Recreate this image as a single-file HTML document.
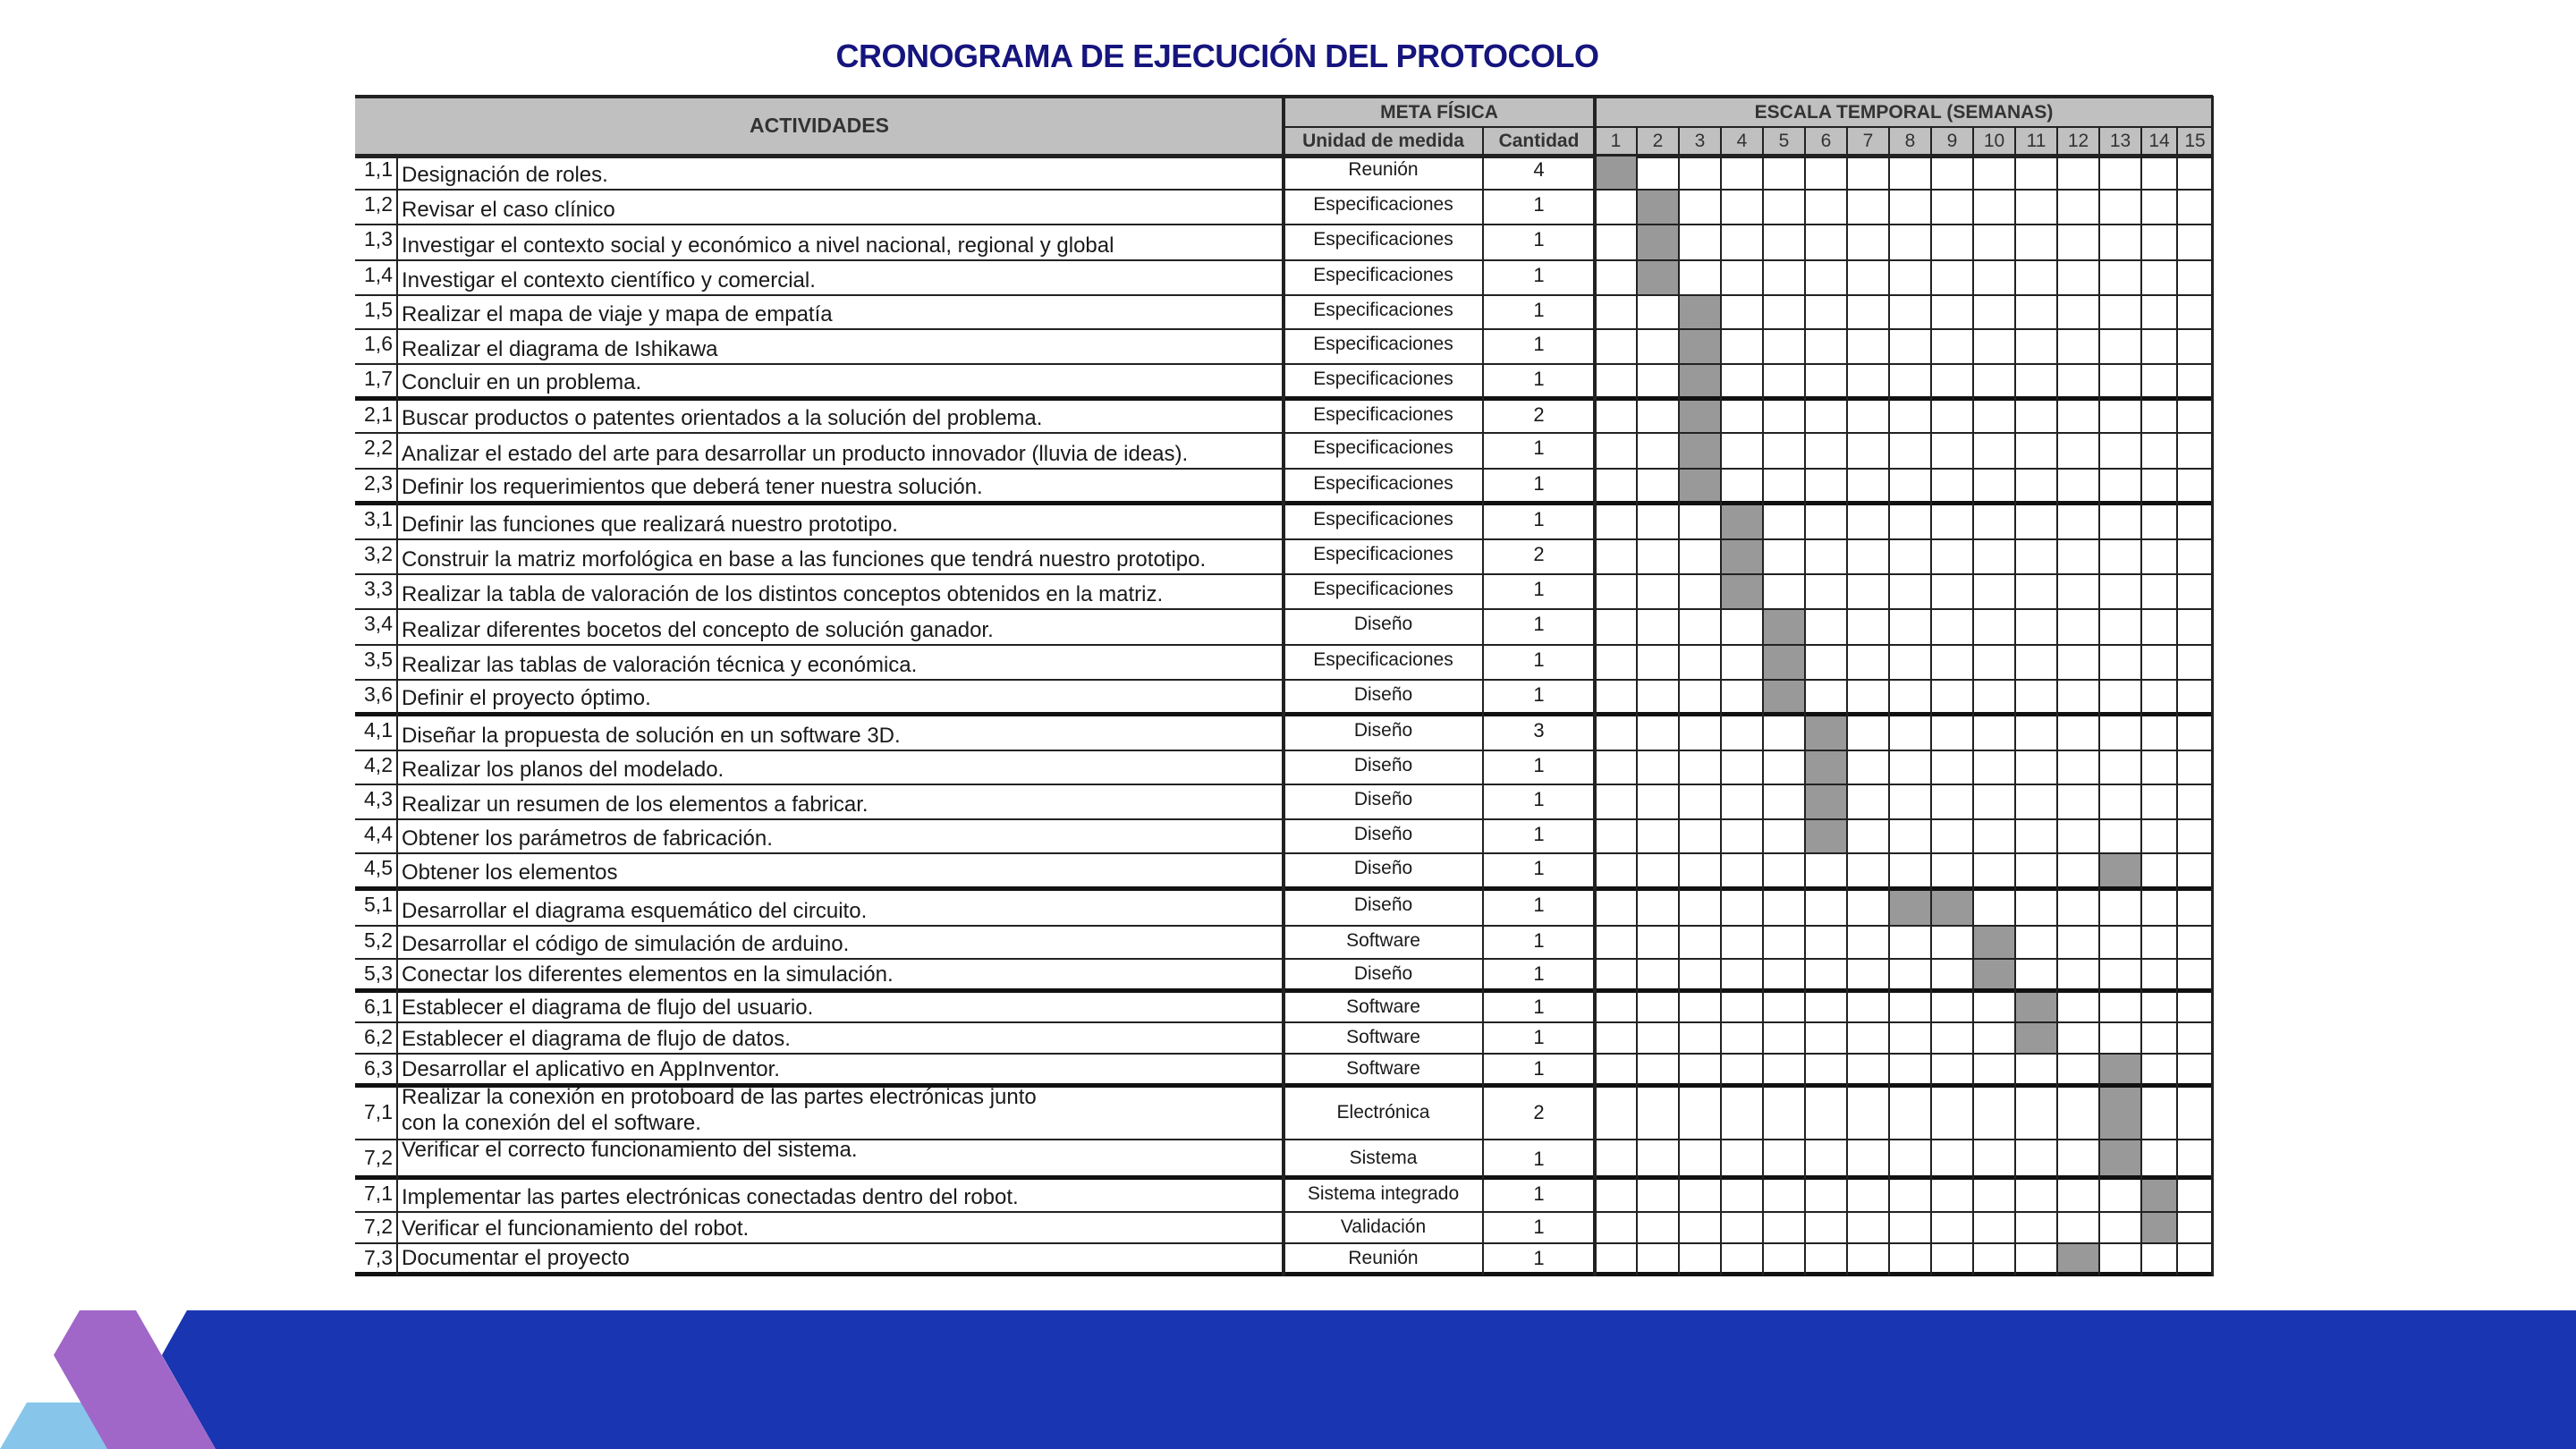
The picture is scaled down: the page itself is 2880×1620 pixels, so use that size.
<!DOCTYPE html>
<html><head><meta charset="utf-8"><style>
*{margin:0;padding:0;box-sizing:border-box}
body{width:2880px;height:1620px;background:#fff;position:relative;overflow:hidden;font-family:"Liberation Sans",Arial,sans-serif;color:#1a1a1a}
.title{position:absolute;left:0;width:2722px;top:42px;text-align:center;font-weight:bold;font-size:36px;color:#16157e;letter-spacing:-0.5px}
.hd{position:absolute;background:#c0c0c0}
.r{position:absolute;left:397px;width:2077px;border-bottom:2px solid #222}
.r.t{border-bottom:5px solid #111}
.n{position:absolute;left:0;width:45px;top:2px;text-align:right;font-size:23px;padding-right:3px}
.a{position:absolute;left:52px;bottom:1px;font-size:24px;white-space:nowrap;line-height:28px}
.u{position:absolute;left:1038px;width:223px;top:4px;text-align:center;font-size:21px;white-space:nowrap}
.q{position:absolute;left:1261px;width:125px;top:3px;text-align:center;font-size:22px}
.v{position:absolute;background:#222}
.s{position:absolute;background:#999}
.wk{position:absolute;top:142px;height:32px;font-size:21px;text-align:center;line-height:32px;color:#333}
</style></head><body>
<div class="title">CRONOGRAMA DE EJECUCIÓN DEL PROTOCOLO</div>

<div class="hd" style="left:397px;top:107px;width:2077px;height:67px"></div>
<div class="v" style="left:397px;top:106px;width:2077px;height:4px"></div>
<div style="position:absolute;left:397px;width:1038px;top:107px;height:67px;line-height:67px;text-align:center;font-weight:bold;font-size:23px;color:#333">ACTIVIDADES</div>
<div style="position:absolute;left:1435px;width:348px;top:110px;height:32px;line-height:32px;text-align:center;font-weight:bold;font-size:21px;color:#333">META FÍSICA</div>
<div style="position:absolute;left:1783px;width:691px;top:110px;height:32px;line-height:32px;text-align:center;font-weight:bold;font-size:21px;color:#333">ESCALA TEMPORAL (SEMANAS)</div>
<div style="position:absolute;left:1435px;width:223px;top:142px;height:32px;line-height:32px;text-align:center;font-weight:bold;font-size:21px;color:#333">Unidad de medida</div>
<div style="position:absolute;left:1658px;width:125px;top:142px;height:32px;line-height:32px;text-align:center;font-weight:bold;font-size:21px;color:#333">Cantidad</div>
<div class="v" style="left:1435px;top:141px;width:1039px;height:2px"></div>
<div class="wk" style="left:1783px;width:47px">1</div><div class="wk" style="left:1830px;width:47px">2</div><div class="wk" style="left:1877px;width:47px">3</div><div class="wk" style="left:1924px;width:47px">4</div><div class="wk" style="left:1971px;width:47px">5</div><div class="wk" style="left:2018px;width:47px">6</div><div class="wk" style="left:2065px;width:47px">7</div><div class="wk" style="left:2112px;width:47px">8</div><div class="wk" style="left:2159px;width:47px">9</div><div class="wk" style="left:2206px;width:47px">10</div><div class="wk" style="left:2253px;width:47px">11</div><div class="wk" style="left:2300px;width:47px">12</div><div class="wk" style="left:2347px;width:47px">13</div><div class="wk" style="left:2394px;width:40px">14</div><div class="wk" style="left:2434px;width:40px">15</div>
<div class="v" style="left:397px;top:172px;width:2077px;height:5px"></div>

<div class="s" style="left:1783px;top:175px;width:47px;height:38px"></div>
<div class="s" style="left:1830px;top:213px;width:47px;height:118px"></div>
<div class="s" style="left:1877px;top:331px;width:47px;height:233px"></div>
<div class="s" style="left:1924px;top:564px;width:47px;height:118px"></div>
<div class="s" style="left:1971px;top:682px;width:47px;height:117px"></div>
<div class="s" style="left:2018px;top:799px;width:47px;height:156px"></div>
<div class="s" style="left:2347px;top:955px;width:47px;height:39px"></div>
<div class="s" style="left:2112px;top:994px;width:94px;height:42px"></div>
<div class="s" style="left:2206px;top:1036px;width:47px;height:72px"></div>
<div class="s" style="left:2253px;top:1108px;width:47px;height:71px"></div>
<div class="s" style="left:2347px;top:1179px;width:47px;height:138px"></div>
<div class="s" style="left:2394px;top:1317px;width:40px;height:74px"></div>
<div class="s" style="left:2300px;top:1391px;width:47px;height:34px"></div>

<div class="r" style="top:174px;height:39px"><span class="n">1,1</span><span class="a">Designación de roles.</span><span class="u">Reunión</span><span class="q">4</span></div>
<div class="r" style="top:213px;height:39px"><span class="n">1,2</span><span class="a">Revisar el caso clínico</span><span class="u">Especificaciones</span><span class="q">1</span></div>
<div class="r" style="top:252px;height:40px"><span class="n">1,3</span><span class="a">Investigar el contexto social y económico a nivel nacional, regional y global</span><span class="u">Especificaciones</span><span class="q">1</span></div>
<div class="r" style="top:292px;height:39px"><span class="n">1,4</span><span class="a">Investigar el contexto científico y comercial.</span><span class="u">Especificaciones</span><span class="q">1</span></div>
<div class="r" style="top:331px;height:38px"><span class="n">1,5</span><span class="a">Realizar el mapa de viaje y mapa de empatía</span><span class="u">Especificaciones</span><span class="q">1</span></div>
<div class="r" style="top:369px;height:39px"><span class="n">1,6</span><span class="a">Realizar el diagrama de Ishikawa</span><span class="u">Especificaciones</span><span class="q">1</span></div>
<div class="r t" style="top:408px;height:40px"><span class="n">1,7</span><span class="a">Concluir en un problema.</span><span class="u">Especificaciones</span><span class="q">1</span></div>
<div class="r" style="top:448px;height:37px"><span class="n">2,1</span><span class="a">Buscar productos o patentes orientados a la solución del problema.</span><span class="u">Especificaciones</span><span class="q">2</span></div>
<div class="r" style="top:485px;height:40px"><span class="n">2,2</span><span class="a">Analizar el estado del arte para desarrollar un producto innovador (lluvia de ideas).</span><span class="u">Especificaciones</span><span class="q">1</span></div>
<div class="r t" style="top:525px;height:40px"><span class="n">2,3</span><span class="a">Definir los requerimientos que deberá tener nuestra solución.</span><span class="u">Especificaciones</span><span class="q">1</span></div>
<div class="r" style="top:565px;height:39px"><span class="n">3,1</span><span class="a">Definir las funciones que realizará nuestro prototipo.</span><span class="u">Especificaciones</span><span class="q">1</span></div>
<div class="r" style="top:604px;height:39px"><span class="n">3,2</span><span class="a">Construir la matriz morfológica en base a las funciones que tendrá nuestro prototipo.</span><span class="u">Especificaciones</span><span class="q">2</span></div>
<div class="r" style="top:643px;height:39px"><span class="n">3,3</span><span class="a">Realizar la tabla de valoración de los distintos conceptos obtenidos en la matriz.</span><span class="u">Especificaciones</span><span class="q">1</span></div>
<div class="r" style="top:682px;height:40px"><span class="n">3,4</span><span class="a">Realizar diferentes bocetos del concepto de solución ganador.</span><span class="u">Diseño</span><span class="q">1</span></div>
<div class="r" style="top:722px;height:39px"><span class="n">3,5</span><span class="a">Realizar las tablas de valoración técnica y económica.</span><span class="u">Especificaciones</span><span class="q">1</span></div>
<div class="r t" style="top:761px;height:40px"><span class="n">3,6</span><span class="a">Definir el proyecto óptimo.</span><span class="u">Diseño</span><span class="q">1</span></div>
<div class="r" style="top:801px;height:39px"><span class="n">4,1</span><span class="a">Diseñar la propuesta de solución en un software 3D.</span><span class="u">Diseño</span><span class="q">3</span></div>
<div class="r" style="top:840px;height:38px"><span class="n">4,2</span><span class="a">Realizar los planos del modelado.</span><span class="u">Diseño</span><span class="q">1</span></div>
<div class="r" style="top:878px;height:39px"><span class="n">4,3</span><span class="a">Realizar un resumen de los elementos a fabricar.</span><span class="u">Diseño</span><span class="q">1</span></div>
<div class="r" style="top:917px;height:38px"><span class="n">4,4</span><span class="a">Obtener los parámetros de fabricación.</span><span class="u">Diseño</span><span class="q">1</span></div>
<div class="r t" style="top:955px;height:41px"><span class="n">4,5</span><span class="a">Obtener los elementos</span><span class="u">Diseño</span><span class="q">1</span></div>
<div class="r" style="top:996px;height:40px"><span class="n">5,1</span><span class="a">Desarrollar el diagrama esquemático del circuito.</span><span class="u">Diseño</span><span class="q">1</span></div>
<div class="r" style="top:1036px;height:37px"><span class="n">5,2</span><span class="a">Desarrollar el código de simulación de arduino.</span><span class="u">Software</span><span class="q">1</span></div>
<div class="r t" style="top:1073px;height:37px"><span class="n">5,3</span><span class="a">Conectar los diferentes elementos en la simulación.</span><span class="u">Diseño</span><span class="q">1</span></div>
<div class="r" style="top:1110px;height:34px"><span class="n">6,1</span><span class="a">Establecer el diagrama de flujo del usuario.</span><span class="u">Software</span><span class="q">1</span></div>
<div class="r" style="top:1144px;height:35px"><span class="n">6,2</span><span class="a">Establecer el diagrama de flujo de datos.</span><span class="u">Software</span><span class="q">1</span></div>
<div class="r t" style="top:1179px;height:37px"><span class="n">6,3</span><span class="a">Desarrollar el aplicativo en AppInventor.</span><span class="u">Software</span><span class="q">1</span></div>
<div class="r" style="top:1216px;height:59px"><span class="n" style="top:14px">7,1</span><span class="a" style="bottom:3px;line-height:29px">Realizar la conexión en protoboard de las partes electrónicas junto<br>con la conexión del el software.</span><span class="u" style="top:16px">Electrónica</span><span class="q" style="top:15px">2</span></div>
<div class="r t" style="top:1275px;height:44px"><span class="n" style="top:6px">7,2</span><span class="a" style="bottom:14px">Verificar el correcto funcionamiento del sistema.</span><span class="u" style="top:8px">Sistema</span><span class="q" style="top:8px">1</span></div>
<div class="r" style="top:1319px;height:37px"><span class="n">7,1</span><span class="a">Implementar las partes electrónicas conectadas dentro del robot.</span><span class="u">Sistema integrado</span><span class="q">1</span></div>
<div class="r" style="top:1356px;height:35px"><span class="n">7,2</span><span class="a">Verificar el funcionamiento del robot.</span><span class="u">Validación</span><span class="q">1</span></div>
<div class="r t" style="top:1391px;height:36px"><span class="n">7,3</span><span class="a">Documentar el proyecto</span><span class="u">Reunión</span><span class="q">1</span></div>

<div class="v" style="left:443px;top:174px;width:2px;height:1252px"></div>
<div class="v" style="left:1433px;top:107px;width:4px;height:1320px"></div>
<div class="v" style="left:1657px;top:142px;width:2px;height:1284px"></div>
<div class="v" style="left:1781px;top:107px;width:4px;height:1320px"></div>
<div class="v" style="left:1829px;top:142px;width:2px;height:1284px"></div>
<div class="v" style="left:1876px;top:142px;width:2px;height:1284px"></div>
<div class="v" style="left:1923px;top:142px;width:2px;height:1284px"></div>
<div class="v" style="left:1970px;top:142px;width:2px;height:1284px"></div>
<div class="v" style="left:2017px;top:142px;width:2px;height:1284px"></div>
<div class="v" style="left:2064px;top:142px;width:2px;height:1284px"></div>
<div class="v" style="left:2111px;top:142px;width:2px;height:1284px"></div>
<div class="v" style="left:2158px;top:142px;width:2px;height:1284px"></div>
<div class="v" style="left:2205px;top:142px;width:2px;height:1284px"></div>
<div class="v" style="left:2252px;top:142px;width:2px;height:1284px"></div>
<div class="v" style="left:2299px;top:142px;width:2px;height:1284px"></div>
<div class="v" style="left:2346px;top:142px;width:2px;height:1284px"></div>
<div class="v" style="left:2393px;top:142px;width:2px;height:1284px"></div>
<div class="v" style="left:2433px;top:142px;width:2px;height:1284px"></div>
<div class="v" style="left:2472px;top:107px;width:3px;height:1320px"></div>

<svg style="position:absolute;left:0;top:0" width="2880" height="1620">
<polygon points="209,1465 2880,1465 2880,1620 241,1620 181,1515" fill="#1a35b2"/>
<polygon points="0,1620 30,1568 92,1568 122,1620" fill="#87c6ea"/>
<polygon points="89,1465 152,1465 241,1620 120,1620 60,1515" fill="#a067c9"/>
</svg>
</body></html>
